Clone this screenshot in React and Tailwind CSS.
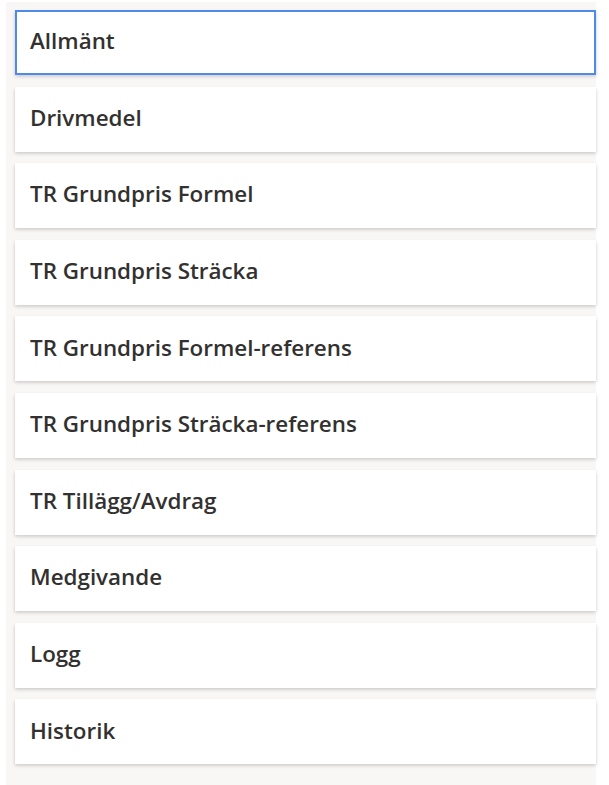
export default function App() {
  const items = [
    "Allmänt",
    "Drivmedel",
    "TR Grundpris Formel",
    "TR Grundpris Sträcka",
    "TR Grundpris Formel-referens",
    "TR Grundpris Sträcka-referens",
    "TR Tillägg/Avdrag",
    "Medgivande",
    "Logg",
    "Historik",
  ];
  return (
    <div className="w-[609px] h-[785px] bg-white overflow-hidden" style={{ fontFamily: '"Open Sans", "Noto Sans", sans-serif' }}>
      <div className="ml-[6px] mt-[2px] w-[590px] h-[783px] bg-[#f8f7f6] pl-[9px] pt-[8px] flex flex-col gap-[11.6px]">
        {items.map((t, i) => (
          <div
            key={t}
            className={
              "h-[65px] shrink-0 bg-white flex items-center shadow-[0_1.6px_3.6px_rgba(0,0,0,0.2),0_0.3px_0.9px_rgba(0,0,0,0.14)] " +
              (i === 0 ? "border-2 border-[#4f8ae8] pl-[13px]" : "pl-[15px]")
            }
          >
            <span className="text-[22.4px] leading-none font-semibold text-[#323130] -mt-[2px]">{t}</span>
          </div>
        ))}
      </div>
    </div>
  );
}
